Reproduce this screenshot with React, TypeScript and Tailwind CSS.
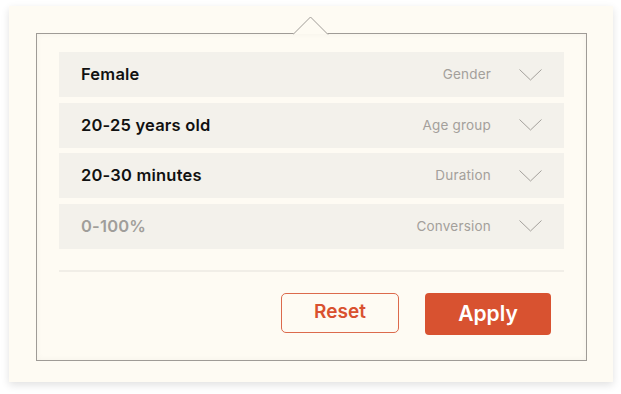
const rows = [
  { value: "Female", label: "Gender", muted: false },
  { value: "20-25 years old", label: "Age group", muted: false },
  { value: "20-30 minutes", label: "Duration", muted: false },
  { value: "0-100%", label: "Conversion", muted: true },
];

function Chevron() {
  return (
    <svg width="23" height="12" viewBox="0 0 23 12" fill="none" className="shrink-0">
      <path d="M0.5 0.5 L11.5 11 L22.5 0.5" stroke="#a3a09b" strokeWidth="1" />
    </svg>
  );
}

export default function App() {
  return (
    <div className="min-h-[394px] w-[621px] bg-white pt-[6px] pl-[9px] font-['Inter','Liberation_Sans',sans-serif]">
      <div className="w-[604px] h-[376px] bg-[#fefbf3] shadow-[0_3px_8px_rgba(0,0,0,0.12)] pt-[27px] pl-[27px]">
        <div className="relative w-[551px] h-[328px] border border-[#9f9b96] bg-[#fefbf3] shadow-[inset_0_0_6px_rgba(0,0,0,0.04)] flex flex-col px-[22px] pt-[18px]">
          {/* caret */}
          <svg
            width="36"
            height="19"
            viewBox="0 0 36 19"
            className="absolute left-[256px] top-[-18px]"
            fill="none"
          >
            <path d="M0 18 L17.5 1 L35 18 Z" fill="#fefbf3" />
            <path d="M0 18.5 L17.5 1 L35 18.5" stroke="#9f9b96" strokeWidth="1" />
          </svg>

          <div className="flex flex-col gap-[5.5px]">
            {rows.map((r) => (
              <div
                key={r.label}
                className="h-[45px] bg-[#f3f1eb] flex items-center pl-[22px] pr-[22px]"
              >
                <span
                  className={
                    r.muted
                      ? "text-[16.5px] font-semibold text-[#a09e9a] tracking-[0.2px]"
                      : "text-[16.5px] font-semibold text-[#111] tracking-[0.2px]"
                  }
                >
                  {r.value}
                </span>
                <span className="ml-auto text-[13.5px] text-[#a3a09b] mr-[28px] tracking-[0.2px]">
                  {r.label}
                </span>
                <Chevron />
              </div>
            ))}
          </div>

          <div className="mt-[21px] h-[2px] bg-[#f1eee7]" />

          <div className="mt-[21px] flex justify-end gap-[26px] pr-[13px]">
            <button className="w-[118px] h-[40px] rounded-[5px] border border-[#dc6a4c] text-[#d9512f] text-[19px] font-semibold bg-transparent">
              Reset
            </button>
            <button className="w-[126px] h-[42px] rounded-[4px] bg-[#d85230] text-white text-[21px] font-semibold">
              Apply
            </button>
          </div>
        </div>
      </div>
    </div>
  );
}
